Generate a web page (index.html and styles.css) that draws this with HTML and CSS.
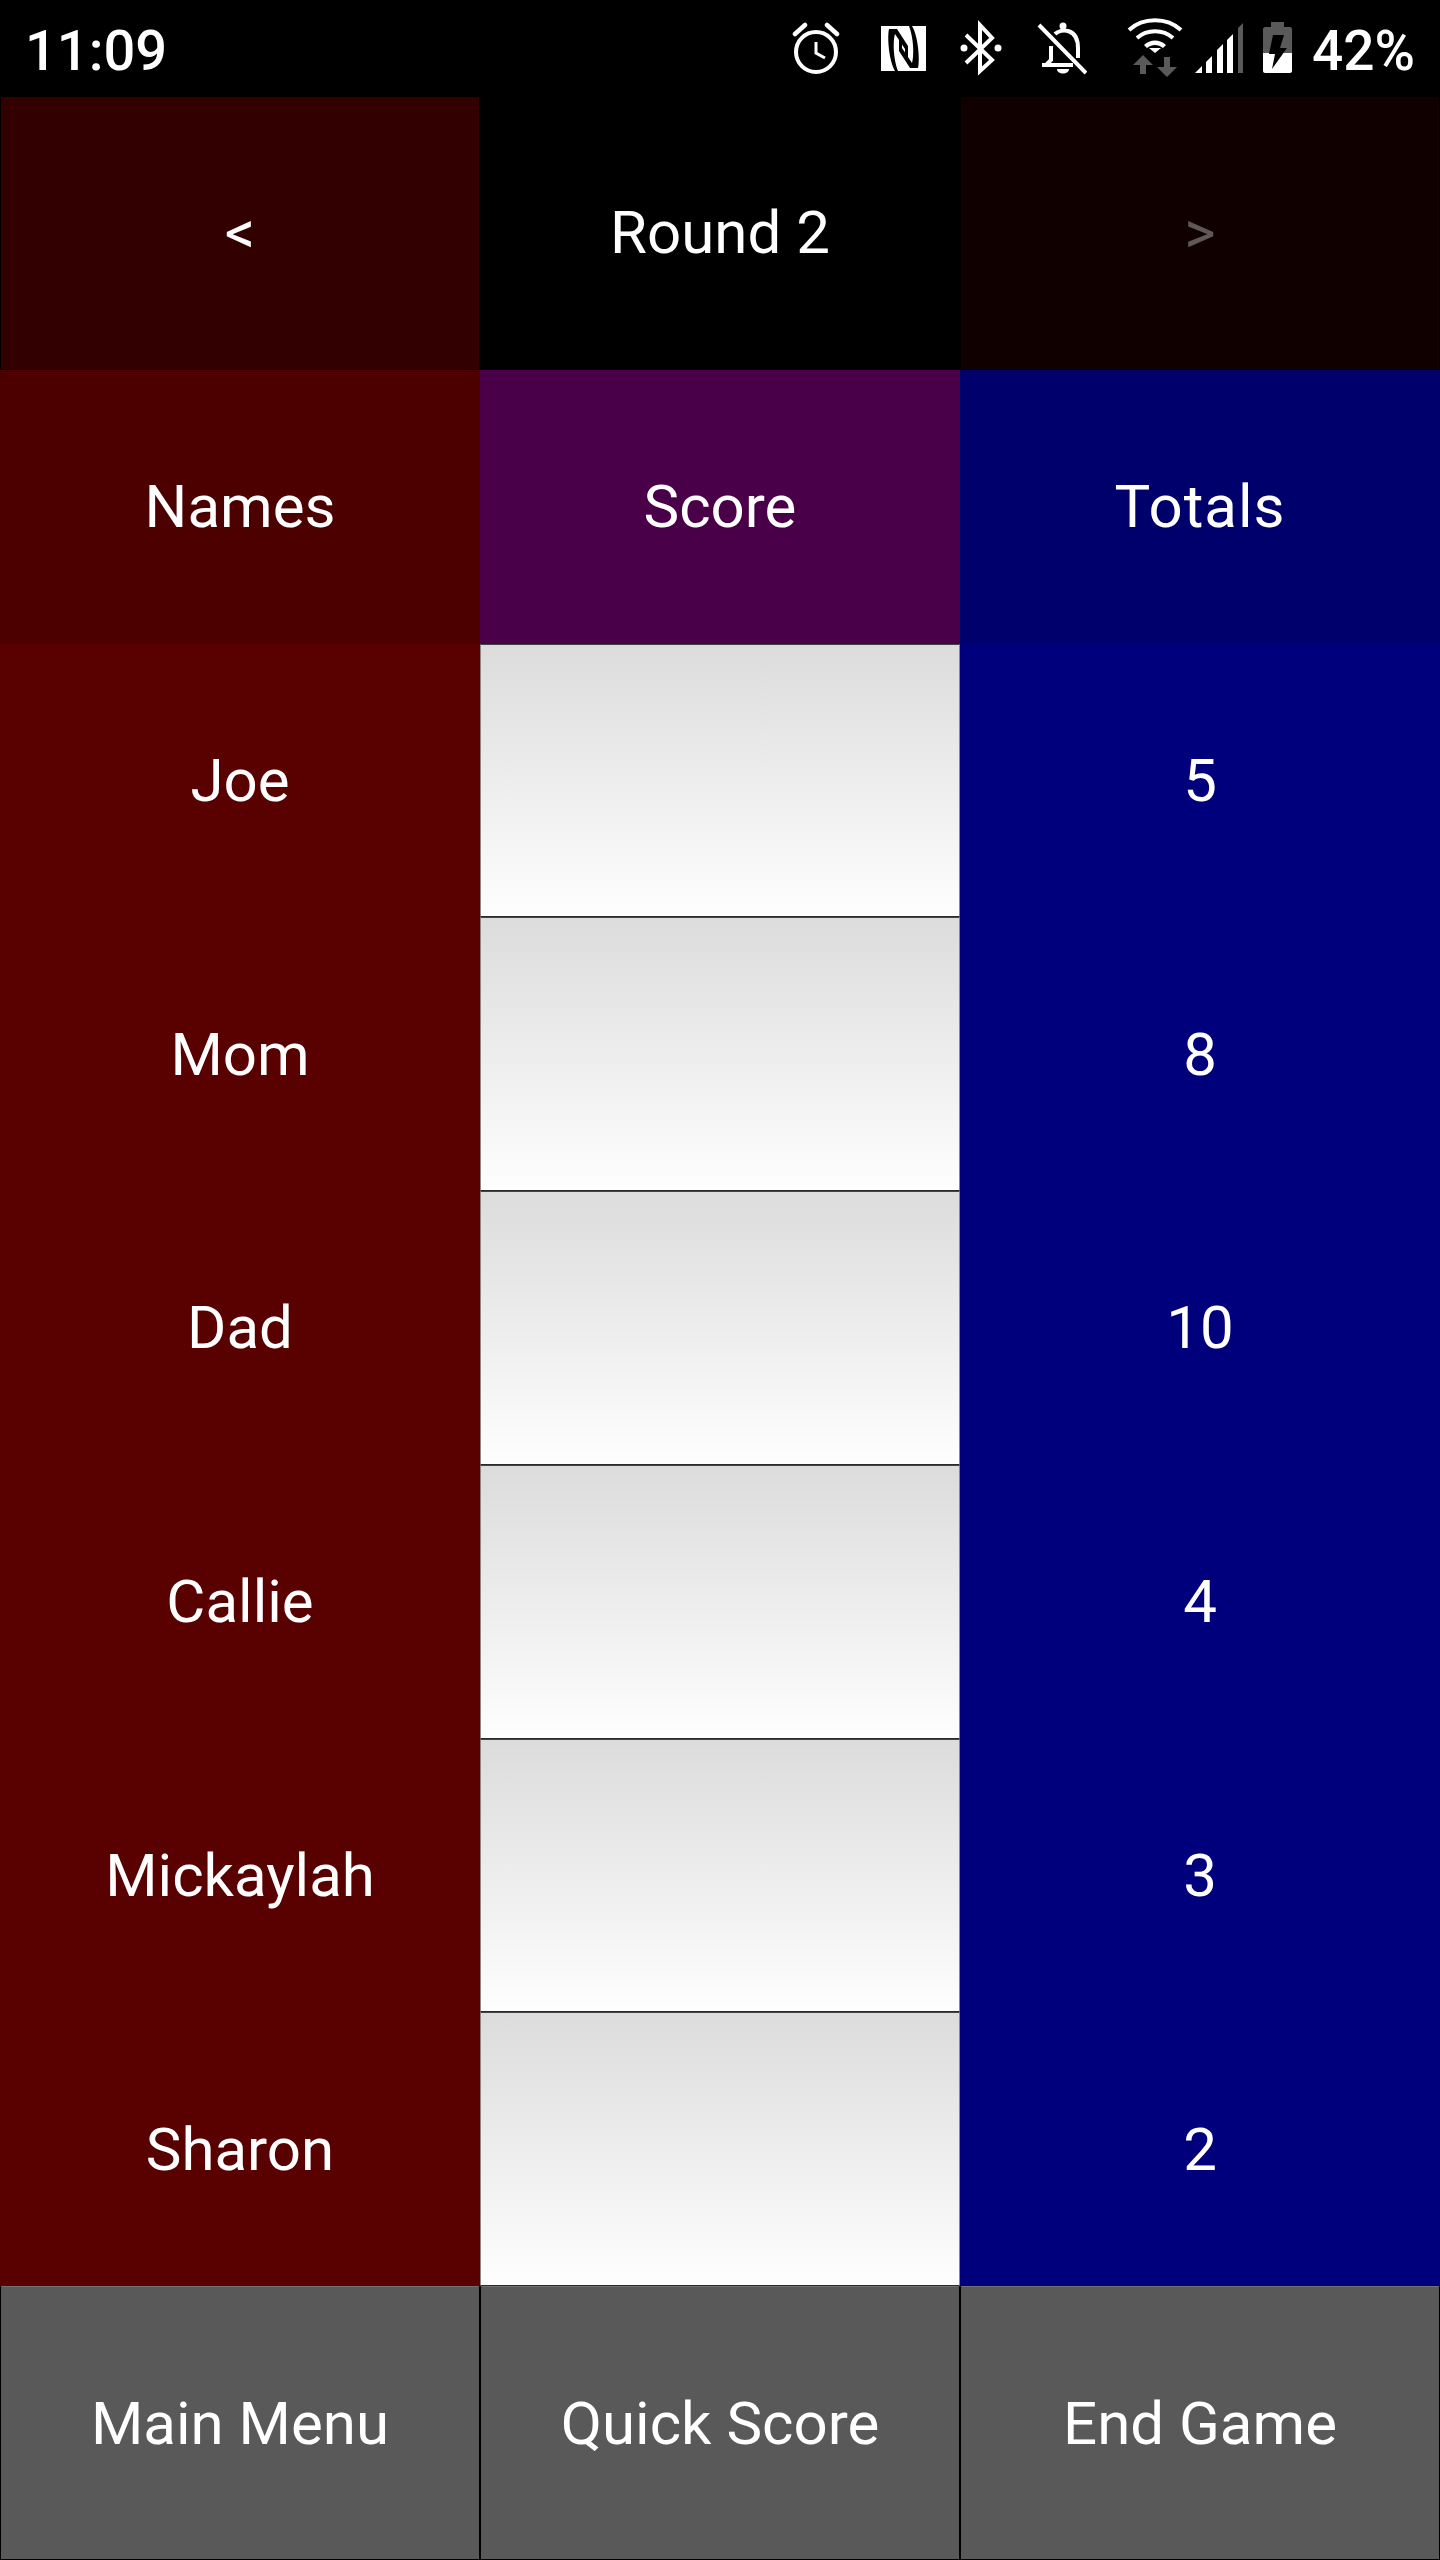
FILE: index.html
```html
<!DOCTYPE html>
<html>

<head>
    <meta charset="UTF-8">
    <title>Scorekeeper</title>
    <link rel="stylesheet" href="styles.css">
</head>

<body>
    <div class="status">
        <div class="clock">11:09</div>
        <div class="icons">
            <!-- alarm -->
            <svg class="icon alarm" width="48" height="96" viewBox="0 0 48 96">
                <g fill="none" stroke="#fff" stroke-width="4">
                    <circle cx="24" cy="52" r="20" />
                    <path d="M3 34L13 25M35 25L45 34" stroke-width="4.5" stroke-linecap="round" />
                    <path d="M24 42V53L33 58" stroke-width="3" />
                </g>
            </svg>
            <!-- nfc -->
            <svg class="icon nfc" width="45" height="96" viewBox="0 0 45 96">
                <g transform="translate(0 26)">
                    <rect width="45" height="45" fill="#fff" />
                    <path d="M8 3H16L27 20V34L24 30V23L14 8C12 14 12 32 17 45H14C8 35 6 12 8 3Z" fill="#000" />
                    <path d="M8 3H16L27 20V34L24 30V23L14 8C12 14 12 32 17 45H14C8 35 6 12 8 3Z" fill="#000" transform="rotate(180 22.5 22.5)" />
                </g>
            </svg>
            <!-- bluetooth -->
            <svg class="icon bluetooth" width="42" height="96" viewBox="0 0 42 96">
                <path d="M6 35L32 60L20 71V25L32 38L6 63" fill="none" stroke="#fff" stroke-width="4" />
                <circle cx="4" cy="48" r="3.5" fill="#fff" />
                <circle cx="38" cy="48" r="3.5" fill="#fff" />
            </svg>
            <!-- bell off -->
            <svg class="icon bell" width="50" height="96" viewBox="0 0 50 96">
                <g fill="none" stroke="#fff" stroke-width="4">
                    <path d="M2 25L49 73" />
                    <path d="M5 65H36" />
                    <path d="M9 65L14 60V46" />
                    <path d="M18 34C24 28 41 28 41 48V58" />
                </g>
                <circle cx="26" cy="26" r="3.5" fill="#fff" />
                <path d="M20 69H32C32 75 20 75 20 69Z" fill="#fff" />
            </svg>
            <!-- wifi and data arrows -->
            <svg class="icon wifi" width="56" height="96" viewBox="0 0 56 96">
                <g fill="none" stroke="#fff" stroke-width="4">
                    <path d="M2 30C16 17 40 17 54 30" />
                    <path d="M10 38C20 29 36 29 46 38" />
                </g>
                <path d="M17 45C23 39 33 39 39 45L36 48C31 44 25 44 20 48Z" fill="#fff" />
                <path d="M22 48H34L28 53Z" fill="#fff" />
                <path d="M16 55L26 65H19V74H13V65H6Z" fill="#5a5a5a" />
                <path d="M37 57H43V67H50L40 77L30 67H37Z" fill="#5a5a5a" />
            </svg>
            <!-- signal -->
            <svg class="icon signal" width="48" height="96" viewBox="0 0 48 96">
                <path d="M0 73L7 66V73Z" fill="#fff" />
                <path d="M11 62L17 56V73H11Z" fill="#fff" />
                <path d="M22 50L28 44V73H22Z" fill="#fff" />
                <path d="M32 40L38 34V73H32Z" fill="#fff" />
                <path d="M43 28L48 23V73H43Z" fill="#5a5a5a" />
            </svg>
            <!-- battery -->
            <svg class="icon battery" width="29" height="96" viewBox="0 0 29 96">
                <path d="M8 22H21V27H27C28 27 29 28 29 29V53H0V29C0 28 1 27 2 27H8Z" fill="#5a5a5a" />
                <path d="M0 53H29V71C29 72 28 73 27 73H2C1 73 0 72 0 71Z" fill="#fff" />
                <path d="M10 35H21L17 48H24L9 69L12 54H6Z" fill="#000" />
            </svg>
            <div class="percent">42%</div>
        </div>
    </div>

    <div class="board">
        <div class="btn prev">&lt;</div>
        <div class="cell round">Round 2</div>
        <div class="btn next">&gt;</div>

        <div class="cell head-name">Names</div>
        <div class="cell head-score">Score</div>
        <div class="cell head-total">Totals</div>

        <div class="cell name">Joe</div>
        <div class="score"></div>
        <div class="cell total">5</div>

        <div class="cell name">Mom</div>
        <div class="score"></div>
        <div class="cell total">8</div>

        <div class="cell name">Dad</div>
        <div class="score"></div>
        <div class="cell total">10</div>

        <div class="cell name">Callie</div>
        <div class="score"></div>
        <div class="cell total">4</div>

        <div class="cell name">Mickaylah</div>
        <div class="score"></div>
        <div class="cell total">3</div>

        <div class="cell name">Sharon</div>
        <div class="score"></div>
        <div class="cell total">2</div>

        <div class="btn menu">Main Menu</div>
        <div class="btn menu">Quick Score</div>
        <div class="btn menu">End Game</div>
    </div>
</body>

</html>
```

FILE: styles.css
```css
* {
    box-sizing: border-box;
}

body {
    margin: 0;
    width: 1440px;
    height: 2560px;
    background: #000;
    color: #fff;
    font-family: Roboto, sans-serif;
    font-size: 60px;
    overflow: hidden;
}

.status {
    height: 96px;
    display: flex;
    justify-content: space-between;
    align-items: center;
    padding: 0 25px;
}

.clock {
    padding-top: 5px;
    font-size: 56px;
    font-weight: 500;
}

.icons {
    display: flex;
    align-items: center;
}

.icon {
    display: block;
}

.nfc {
    margin-left: 41px;
}

.bluetooth {
    margin-left: 34px;
}

.bell {
    margin-left: 35px;
}

.wifi {
    margin-left: 40px;
}

.signal {
    margin-left: 12px;
}

.battery {
    margin-left: 20px;
}

.percent {
    margin-left: 20px;
    padding-top: 5px;
    font-size: 55px;
    font-weight: 500;
}

.board {
    height: 2464px;
    display: grid;
    grid-template-columns: repeat(3, 480px);
    grid-template-rows: repeat(9, 1fr);
}

.cell,
.btn {
    display: flex;
    align-items: center;
    justify-content: center;
}

.btn {
    border: 1px solid #000;
    border-radius: 2px;
}

.prev {
    background: #330000;
}

.next {
    background: #100000;
    color: #605858;
}

.head-name {
    background: #4c0000;
}

.head-score {
    background: #4a0048;
}

.head-total {
    background: #00006c;
    letter-spacing: 1px;
}

.name {
    background: #590000;
}

.total {
    background: #00007c;
}

.score {
    border: 1px solid #888;
    border-top-color: #444;
    border-bottom-color: #2a2a2a;
    background: linear-gradient(#dcdcdc, #fefefe);
}

.menu {
    background: #595959;
    border-top-color: #707070;
}
```
